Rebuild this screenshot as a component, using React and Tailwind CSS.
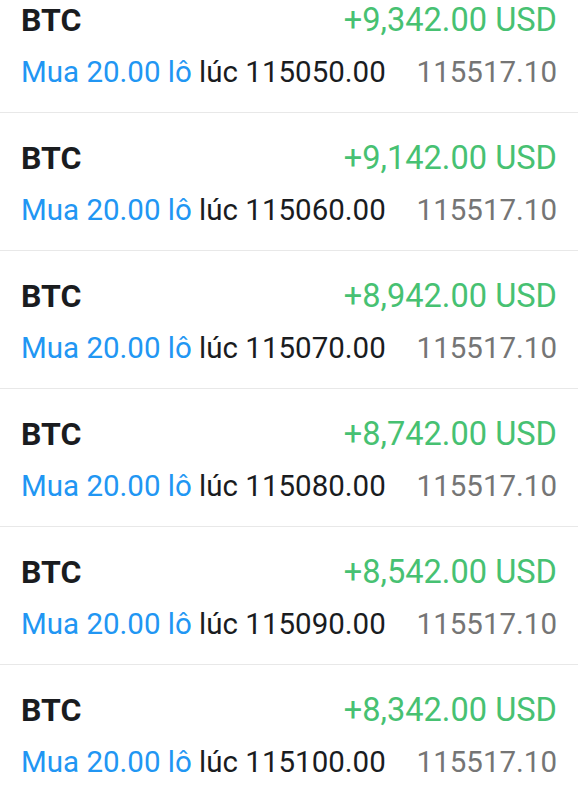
export default function App() {
  const rows = [
    { pnl: "+9,342.00", open: "115050.00" },
    { pnl: "+9,142.00", open: "115060.00" },
    { pnl: "+8,942.00", open: "115070.00" },
    { pnl: "+8,742.00", open: "115080.00" },
    { pnl: "+8,542.00", open: "115090.00" },
    { pnl: "+8,342.00", open: "115100.00" },
  ];

  return (
    <div className="h-[800px] w-[578px] overflow-hidden bg-white font-['Roboto',sans-serif]">
      <div className="-mt-[25px]">
        {rows.map((r, i) => (
          <div key={i} className="h-[138px] border-b border-[#e8e8e8] px-[21px] pt-[25px]">
            <div className="flex h-[40px] items-center justify-between text-[32px] leading-[40px]">
              <span className="font-bold text-[#1a1c1f]">BTC</span>
              <span className="text-[32.6px] text-[#47c172]">{r.pnl} USD</span>
            </div>
            <div className="mt-[12px] flex h-[40px] items-center justify-between text-[29.5px] leading-[40px]">
              <span>
                <span className="text-[#2196f3]">Mua 20.00 lô</span>
                <span className="text-[#1a1c1f]"> lúc {r.open}</span>
              </span>
              <span className="text-[#757575]">115517.10</span>
            </div>
          </div>
        ))}
      </div>
    </div>
  );
}
